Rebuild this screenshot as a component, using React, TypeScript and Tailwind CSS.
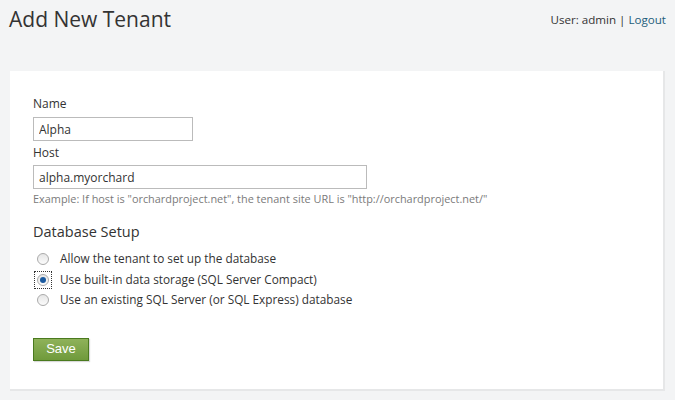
import { useState } from 'react';

const options = [
  'Allow the tenant to set up the database',
  'Use built-in data storage (SQL Server Compact)',
  'Use an existing SQL Server (or SQL Express) database',
];

const App = () => {
  const [db, setDb] = useState(1);

  return (
    <div
      className="min-h-screen w-full bg-[#f3f4f5] text-[#333] px-[10px]"
      style={{ fontFamily: '"Open Sans", "Noto Sans", sans-serif' }}
    >
      <div className="flex justify-between items-start h-[71px]">
        <h1 className="text-[21px] leading-none pt-[9px] -ml-[1px] text-[#333]">Add New Tenant</h1>
        <div className="text-[11.6px] pt-[11px] -mr-[1px]">
          User: admin | <a className="text-[#1e5d7b]">Logout</a>
        </div>
      </div>

      <div className="bg-white w-[655px] h-[320px] border-r-2 border-b-2 border-[#e6e7e8] px-[23px] pt-[24px]">
        <label className="block text-[12px] leading-[17px]">Name</label>
        <input
          className="block mt-[5px] w-[160px] h-[24px] border border-[#bbb] px-[5px] text-[12px] outline-none"
          defaultValue="Alpha"
        />
        <label className="block text-[12px] leading-[17px] mt-[3px]">Host</label>
        <input
          className="block mt-[4px] w-[334px] h-[24px] border border-[#bbb] px-[5px] text-[12px] outline-none"
          defaultValue="alpha.myorchard"
        />
        <p className="text-[10.9px] leading-[18px] text-[#7a7a7a] mt-[1px]">
          Example: If host is "orchardproject.net", the tenant site URL is "http://orchardproject.net/"
        </p>

        <h2 className="text-[14.5px] leading-[20px] mt-[14px]">Database Setup</h2>
        <div className="flex flex-col mt-[7px]">
          {options.map((o, i) => (
            <label key={i} className="flex items-center h-[20.5px] text-[11.8px] cursor-pointer">
              <span
                className={`flex items-center justify-center w-[18px] h-[18px] ml-[1px] ${
                  db === i ? 'border border-dotted border-[#333]' : ''
                }`}
              >
                <span
                  className="w-[12px] h-[12px] rounded-full border border-[#aaa] bg-gradient-to-b from-[#e6e6e6] to-[#fbfbfb] flex items-center justify-center"
                  onClick={() => setDb(i)}
                >
                  {db === i && <span className="w-[6px] h-[6px] rounded-full bg-[#1a5aa0]" />}
                </span>
              </span>
              <span className="ml-[8px]">{o}</span>
            </label>
          ))}
        </div>

        <button
          className="mt-[27px] w-[56px] h-[23px] border border-[#4a7a1e] bg-gradient-to-b from-[#8fb25a] to-[#6f9a3b] text-white text-[13px] shadow-[1px_1px_1px_rgba(0,0,0,0.15)]"
          style={{ fontFamily: '"Liberation Sans", Arial, sans-serif' }}
        >
          Save
        </button>
      </div>
    </div>
  );
};

export default App;
